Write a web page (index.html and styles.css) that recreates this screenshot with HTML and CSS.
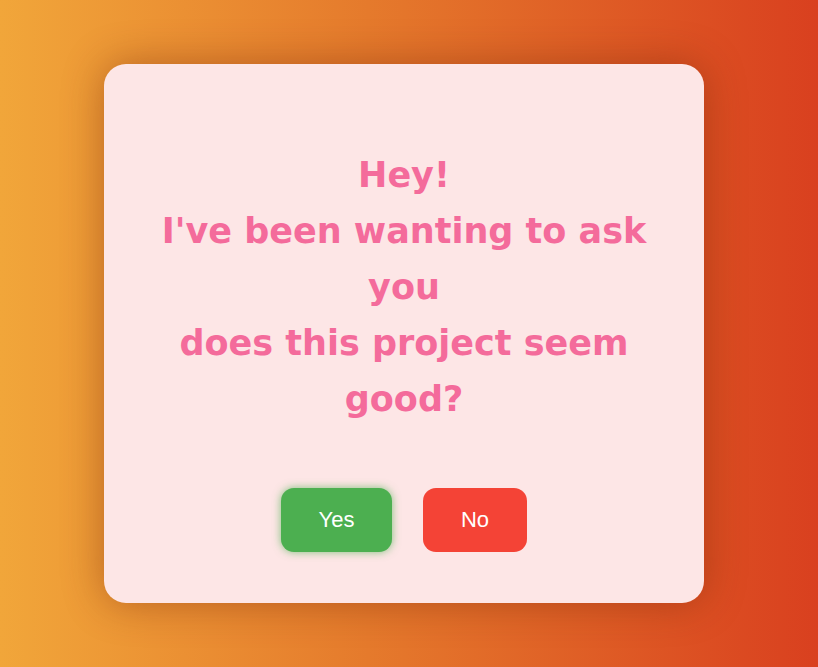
FILE: index.html
```html
<!DOCTYPE html>
<html lang="en">
<head>
<meta charset="utf-8">
<title>Hey!</title>
<link rel="stylesheet" href="styles.css">
</head>
<body>
<main class="card">
  <h1 class="question">Hey!<br>I've been wanting to ask you<br>does this project seem good?</h1>
  <div class="actions">
    <button class="btn btn-yes" type="button">Yes</button>
    <button class="btn btn-no" type="button">No</button>
  </div>
</main>
</body>
</html>
```

FILE: styles.css
```css
html, body {
  height: 100%;
}

body {
  margin: 0;
  display: flex;
  align-items: center;
  justify-content: center;
  background: linear-gradient(90deg, #f1a63a 0%, #e57a2c 45%, #d9401f 100%);
  font-family: "Liberation Sans", Arial, sans-serif;
  overflow: hidden;
}

.card {
  box-sizing: border-box;
  width: 600px;
  margin-right: 10px;
  padding: 83px 40px 51px;
  background: #fde6e6;
  border-radius: 22px;
  box-shadow: 0 0 40px rgba(120, 40, 10, 0.45);
  text-align: center;
}

.question {
  margin: 0 0 61px;
  font-family: "Comic Sans MS", "DejaVu Sans", sans-serif;
  font-weight: bold;
  font-size: 35px;
  line-height: 56px;
  color: #f46b9b;
}

.actions {
  display: flex;
  justify-content: center;
  gap: 31px;
}

.btn {
  height: 64px;
  border: none;
  border-radius: 13px;
  color: #ffffff;
  font-family: "Liberation Sans", Arial, sans-serif;
  font-size: 22px;
  cursor: pointer;
}

.btn-yes {
  width: 111px;
  background: #4caf50;
  box-shadow: 0 0 8px rgba(76, 175, 80, 0.7);
}

.btn-no {
  width: 104px;
  background: #f44336;
}
```
